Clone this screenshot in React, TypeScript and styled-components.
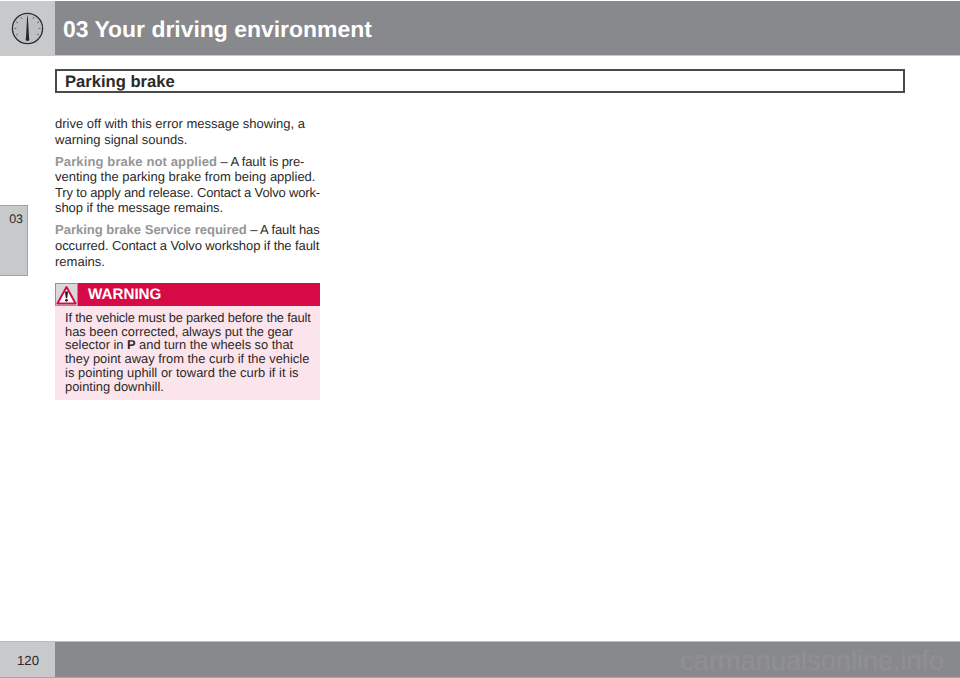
import React from "react";
import styled, { createGlobalStyle } from "styled-components";

const Global = createGlobalStyle`
  html, body { margin: 0; padding: 0; background: #fff; }
  body {
    font-family: "Liberation Sans", Arial, sans-serif;
    text-rendering: geometricPrecision;
  }
`;

const Page = styled.div`
  width: 960px;
  height: 678px;
  display: flex;
  flex-direction: column;
  overflow: hidden;
  background: #fff;
  color: #2b2a29;
`;

const Header = styled.header`
  margin-top: 1px;
  height: 54px;
  flex: none;
  display: flex;
  background: #88898c;
  border-bottom: 1px solid #c9cacc;
`;

const IconCell = styled.div`
  width: 55px;
  flex: none;
  display: flex;
  align-items: center;
  justify-content: center;
  background: #c8c9cb;
`;

const Title = styled.h1`
  margin: 0;
  padding: 1px 0 0 8px;
  font-size: 22.95px;
  line-height: 54px;
  font-weight: 700;
  color: #fff;
  white-space: nowrap;
`;

const SectionBox = styled.div`
  margin: 13px 0 0 55px;
  width: 850px;
  height: 24px;
  box-sizing: border-box;
  flex: none;
  border: 2px solid #4a4a4a;
  padding-left: 8px;
  font-size: 16.6px;
  line-height: 21px;
  font-weight: 700;
  color: #2b2a29;
`;

const Middle = styled.div`
  flex: 1;
  display: flex;
  min-height: 0;
`;

const TabColumn = styled.aside`
  width: 55px;
  flex: none;
  padding-top: 112px;
`;

const SideTab = styled.div`
  width: 28px;
  height: 71px;
  box-sizing: border-box;
  background: #c8c9cb;
  border: 1px solid #a2a3a5;
  border-left: none;
  padding: 6px 4px 0 0;
  text-align: right;
  font-size: 12.4px;
  line-height: 15px;
  color: #2b2a29;
`;

const Content = styled.main`
  width: 265px;
  flex: none;
  padding-top: 23px;
`;

const Para = styled.p`
  margin: 0 0 6.4px;
  font-size: 13.02px;
  line-height: 15.6px;
  white-space: nowrap;
`;

const Line = styled.span<{ $track?: number }>`
  display: block;
  letter-spacing: ${(p) => p.$track ?? 0}px;
`;

const Term = styled.span<{ $track?: number }>`
  font-weight: 700;
  color: #949597;
  letter-spacing: ${(p) => p.$track ?? 0}px;
`;

const Warning = styled.section`
  margin-top: 14px;
  background: #fce4ec;
`;

const WarningHead = styled.div`
  height: 23px;
  display: flex;
  align-items: center;
  background: #d60b45;
`;

const WarningIconCell = styled.div`
  width: 23px;
  height: 23px;
  flex: none;
  box-sizing: border-box;
  border: 1px solid #e96a8c;
  background: #d9d9da;
  display: flex;
  align-items: center;
  justify-content: center;
`;

const WarningTitle = styled.h2`
  margin: 0;
  padding-left: 10px;
  font-size: 15.2px;
  font-weight: 700;
  line-height: 23px;
  color: #fff;
`;

const WarningBody = styled.div`
  padding: 4.6px 0 6px 10px;
  font-size: 12.9px;
  line-height: 13.8px;
  white-space: nowrap;
  color: #2b2a29;
`;

const Footer = styled.footer`
  height: 37px;
  flex: none;
  position: relative;
  display: flex;
  background: #88898c;
  border-top: 1px solid #b9babc;
  border-bottom: 1px solid #a5a6a8;
  box-sizing: border-box;
`;

const PageNumberCell = styled.div`
  width: 55px;
  flex: none;
  box-sizing: border-box;
  background: #c8c9cb;
  padding: 11px 16px 0 0;
  text-align: right;
  font-size: 13.2px;
  line-height: 15px;
  color: #2b2a29;
`;

const Watermark = styled.span`
  position: absolute;
  right: 16px;
  top: 4px;
  font-size: 27.8px;
  line-height: 30px;
  letter-spacing: -0.3px;
  color: #909093;
`;

const Gauge = () => {
  const ticks = [-120, -90, -60, -30, 0, 30, 60, 90, 120];
  return (
    <svg width="33" height="33" viewBox="0 0 33 33" aria-hidden="true">
      <circle cx="16.5" cy="16.5" r="15.1" fill="#bfc0c2" stroke="#2f2f2f" strokeWidth="1.3" />
      {ticks.map((a) => (
        <line
          key={a}
          x1="16.5"
          y1="3.4"
          x2="16.5"
          y2="5.4"
          stroke="#555557"
          strokeWidth="0.8"
          transform={`rotate(${a} 16.5 16.5)`}
        />
      ))}
      <path d="M16.1 5.5 L16.9 5.5 L18.1 27 L14.9 27 Z" fill="#262626" />
      <circle cx="16.5" cy="27" r="1.9" fill="#262626" />
    </svg>
  );
};

const WarningTriangle = () => (
  <svg width="21" height="20" viewBox="0 0 21 20" aria-hidden="true">
    <path d="M10.5 2 L19.6 18.4 L1.4 18.4 Z" fill="#fff" stroke="#d60b45" strokeWidth="2" strokeLinejoin="round" />
    <path d="M8.9 6.6 H12.1 L11.2 13.2 H9.8 Z" fill="#1f1f1f" />
    <circle cx="10.5" cy="15.3" r="1.4" fill="#1f1f1f" />
  </svg>
);

export default function App() {
  return (
    <Page>
      <Global />
      <Header>
        <IconCell>
          <Gauge />
        </IconCell>
        <Title>03 Your driving environment</Title>
      </Header>
      <SectionBox>Parking brake</SectionBox>
      <Middle>
        <TabColumn>
          <SideTab>03</SideTab>
        </TabColumn>
        <Content>
          <Para>
            <Line>drive off with this error message showing, a</Line>
            <Line>warning signal sounds.</Line>
          </Para>
          <Para>
            <Line $track={-0.14}>
              <Term $track={0.12}>Parking brake not applied</Term> – A fault is pre-
            </Line>
            <Line>venting the parking brake from being applied.</Line>
            <Line $track={-0.17}>Try to apply and release. Contact a Volvo work-</Line>
            <Line $track={-0.07}>shop if the message remains.</Line>
          </Para>
          <Para>
            <Line $track={-0.12}>
              <Term>Parking brake Service required</Term> – A fault has
            </Line>
            <Line $track={-0.09}>occurred. Contact a Volvo workshop if the fault</Line>
            <Line>remains.</Line>
          </Para>
          <Warning>
            <WarningHead>
              <WarningIconCell>
                <WarningTriangle />
              </WarningIconCell>
              <WarningTitle>WARNING</WarningTitle>
            </WarningHead>
            <WarningBody>
              <Line $track={-0.19}>If the vehicle must be parked before the fault</Line>
              <Line $track={-0.03}>has been corrected, always put the gear</Line>
              <Line $track={-0.03}>
                selector in <b>P</b> and turn the wheels so that
              </Line>
              <Line>they point away from the curb if the vehicle</Line>
              <Line $track={0.03}>is pointing uphill or toward the curb if it is</Line>
              <Line>pointing downhill.</Line>
            </WarningBody>
          </Warning>
        </Content>
      </Middle>
      <Footer>
        <PageNumberCell>120</PageNumberCell>
        <Watermark>carmanualsonline.info</Watermark>
      </Footer>
    </Page>
  );
}
